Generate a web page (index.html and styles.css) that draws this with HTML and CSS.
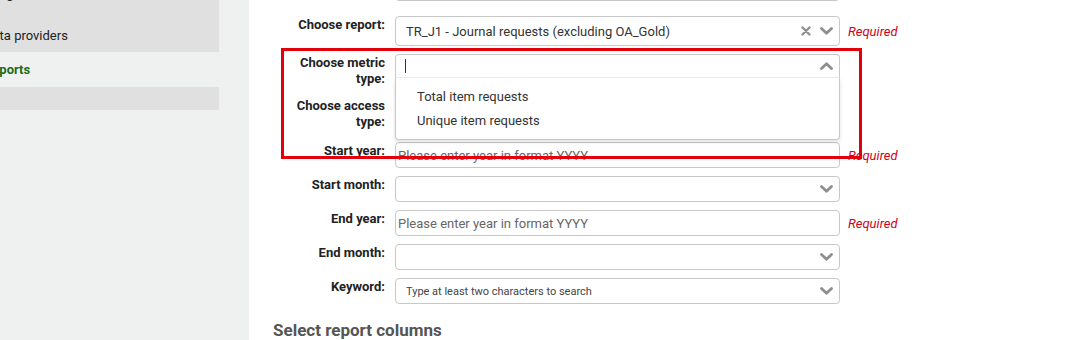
FILE: index.html
```html
<!DOCTYPE html>
<html>
  <head>
    <meta charset="utf-8" />
    <title>Reports</title>
    <link rel="stylesheet" href="styles.css">
  </head>
  <body>
    <div class="page">
      <aside class="sidebar">
        <div class="nav-group">
          <a href="#" class="nav-item">Usage</a>
          <a href="#" class="nav-item">Data providers</a>
        </div>
        <a href="#" class="nav-item active">Reports</a>
        <div class="nav-group nav-empty"></div>
      </aside>

      <main class="content">
        <form class="report-form">
          <div class="form-row row-prev">
            <label>Choose platform:</label>
            <div class="select"></div>
          </div>

          <div class="form-row row-report">
            <label>Choose report:</label>
            <div class="select select-lg">
              <span class="value">TR_J1 - Journal requests (excluding OA_Gold)</span>
              <span class="icons">
                <svg class="icon-x" width="10" height="10" viewBox="0 0 10 10"><path d="M1.5 1.5 L8.5 8.5 M8.5 1.5 L1.5 8.5" /></svg>
                <svg class="chevron" width="13" height="8" viewBox="0 0 13 8"><path d="M1.5 1.5 L6.5 6.3 L11.5 1.5" /></svg>
              </span>
            </div>
            <span class="req">Required</span>
          </div>

          <div class="form-row row-metric">
            <label>Choose metric<br>type:</label>
            <div class="select select-open">
              <span class="cursor"></span>
              <span class="icons">
                <svg class="chevron" width="13" height="8" viewBox="0 0 13 8"><path d="M1.5 6.5 L6.5 1.7 L11.5 6.5" /></svg>
              </span>
              <ul class="dropdown">
                <li>Total item requests</li>
                <li>Unique item requests</li>
              </ul>
            </div>
          </div>

          <div class="form-row row-access">
            <label>Choose access<br>type:</label>
            <div class="select"></div>
          </div>

          <div class="form-row">
            <label>Start year:</label>
            <input class="text-input" type="text" placeholder="Please enter year in format YYYY">
            <span class="req">Required</span>
          </div>

          <div class="form-row">
            <label>Start month:</label>
            <div class="select">
              <span class="icons">
                <svg class="chevron" width="13" height="8" viewBox="0 0 13 8"><path d="M1.5 1.5 L6.5 6.3 L11.5 1.5" /></svg>
              </span>
            </div>
          </div>

          <div class="form-row">
            <label>End year:</label>
            <input class="text-input" type="text" placeholder="Please enter year in format YYYY">
            <span class="req">Required</span>
          </div>

          <div class="form-row">
            <label>End month:</label>
            <div class="select">
              <span class="icons">
                <svg class="chevron" width="13" height="8" viewBox="0 0 13 8"><path d="M1.5 1.5 L6.5 6.3 L11.5 1.5" /></svg>
              </span>
            </div>
          </div>

          <div class="form-row">
            <label>Keyword:</label>
            <div class="select select-keyword">
              <span class="placeholder">Type at least two characters to search</span>
              <span class="icons">
                <svg class="chevron" width="13" height="8" viewBox="0 0 13 8"><path d="M1.5 1.5 L6.5 6.3 L11.5 1.5" /></svg>
              </span>
            </div>
          </div>
        </form>

        <h2 class="section-title">Select report columns</h2>
      </main>

      <div class="highlight"></div>
    </div>
  </body>
</html>
```

FILE: styles.css
```css
/* || Initial styles */

html {
  font-family: Roboto, "Liberation Sans", sans-serif;
  font-size: 13px;
  color: #222;
}

* {
  box-sizing: border-box;
}

body {
  margin: 0;
  overflow: hidden;
}

/* || Layout */

.page {
  display: flex;
  height: 340px;
  position: relative;
  overflow: hidden;
}

.sidebar {
  width: 249px;
  flex-shrink: 0;
  background-color: #eff1f0;
  overflow: hidden;
}

.nav-group {
  width: 219px;
  background-color: #e0e0e0;
  margin-top: -21px;
}

.nav-item {
  display: block;
  height: 36px;
  line-height: 40px;
  margin-left: -16px;
  color: #222;
  text-decoration: none;
  white-space: nowrap;
}

.nav-group .nav-item:first-child {
  height: 37px;
  line-height: 30px;
}

.nav-item.active {
  height: 35px;
  line-height: 36px;
  color: #1c6b16;
  font-weight: bold;
}

.nav-empty {
  margin-top: 0;
  height: 23px;
}

.content {
  flex: 1;
  background-color: #fff;
  padding-left: 24px;
}

/* || Form */

.report-form {
  margin-top: -25px;
}

.form-row {
  display: grid;
  grid-template-columns: 122px 445px auto;
  align-items: start;
  margin-bottom: 8px;
}

.form-row label {
  text-align: right;
  padding-right: 10px;
  padding-top: 1px;
  font-weight: bold;
  line-height: 16px;
  color: #222;
}

.row-prev {
  margin-bottom: 15px;
}

.row-metric {
  min-height: 35px;
}

.row-access {
  min-height: 38px;
  margin-bottom: 7px;
}

.select,
.text-input {
  position: relative;
  height: 26px;
  border: 1px solid #c8c8c8;
  border-radius: 4px;
  background-color: #fff;
  display: flex;
  align-items: center;
}

.select-lg {
  height: 30px;
}

.select .value {
  padding-left: 10px;
  color: #333;
}

.select .icons {
  margin-left: auto;
  display: flex;
  align-items: center;
  gap: 9px;
  padding-right: 6px;
}

.select svg path {
  fill: none;
  stroke: #8f8f8f;
  stroke-width: 2.8;
  stroke-linecap: round;
  stroke-linejoin: round;
}

.select .icon-x path {
  stroke-width: 2.4;
}

.select-open {
  height: 24px;
  border-bottom-left-radius: 0;
  border-bottom-right-radius: 0;
  border-bottom-color: #eee;
}

.cursor {
  width: 1px;
  height: 14px;
  margin-left: 9px;
  background-color: #333;
}

.dropdown {
  position: absolute;
  top: 23px;
  left: -1px;
  right: -1px;
  z-index: 2;
  margin: 0;
  padding: 7px 0 6px;
  list-style-type: none;
  background-color: #fff;
  border: 1px solid #c8c8c8;
  border-top: none;
  border-radius: 0 0 4px 4px;
  box-shadow: 0 2px 4px rgba(0, 0, 0, 0.12);
}

.dropdown li {
  line-height: 24px;
  padding-left: 21px;
  color: #333;
}

.text-input {
  width: 445px;
  padding: 0 2px;
  font-family: inherit;
  font-size: 13px;
  color: #333;
}

.text-input::placeholder {
  color: #666;
}

.select-keyword .placeholder {
  padding-left: 10px;
  font-size: 11px;
  color: #444;
}

.req {
  align-self: center;
  padding-left: 8px;
  color: #d0021b;
  font-style: italic;
}

.section-title {
  margin: 16px 0 0;
  font-size: 17px;
  color: #555;
}

/* || Annotation */

.highlight {
  position: absolute;
  left: 281px;
  top: 48px;
  width: 581px;
  height: 111px;
  border: 3px solid #e3000b;
  z-index: 5;
  pointer-events: none;
}
```
